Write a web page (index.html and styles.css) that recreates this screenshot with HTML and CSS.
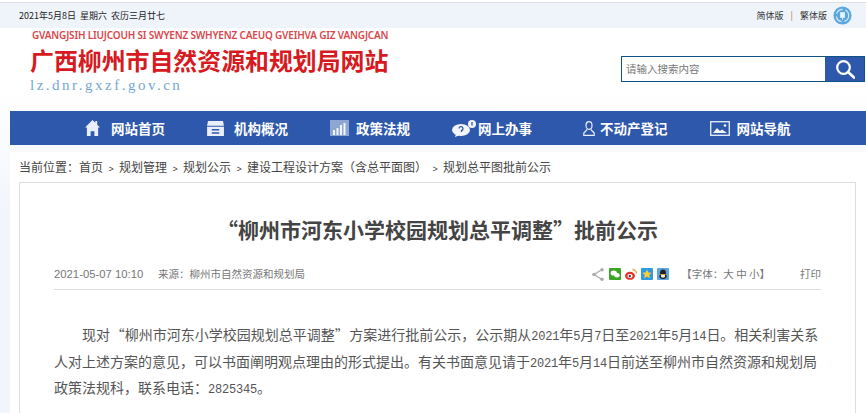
FILE: index.html
```html
<!DOCTYPE html>
<html lang="zh-CN">
<head>
  <meta charset="UTF-8">
  <meta name="viewport" content="width=device-width, initial-scale=1.0">
  <title>“柳州市河东小学校园规划总平调整”批前公示</title>
  <link rel="stylesheet" href="styles.css">
</head>
<body>

  <!-- Top bar -->
  <div class="topbar">
    <span class="date">2021年5月8日&nbsp; 星期六&nbsp; 农历三月廿七</span>
    <div class="lang">
      <a>简体版</a>
      <span class="lang-sep">|</span>
      <a>繁体版</a>
      <svg class="globe" viewBox="0 0 20 20">
        <circle cx="10" cy="10" r="9.5" fill="#5aa7e2"/>
        <circle cx="10" cy="10" r="6.5" fill="none" stroke="#d6eafa" stroke-width="1.2" stroke-dasharray="8 3"/>
        <rect x="7.5" y="6.5" width="5" height="6" fill="#e8f3fc"/>
        <path d="M10 12.5v2" stroke="#e8f3fc" stroke-width="1"/>
      </svg>
    </div>
  </div>

  <!-- Logo and search -->
  <header class="header">
    <div class="logo">
      <div class="logo-pinyin">GVANGJSIH LIUJCOUH SI SWYENZ SWHYENZ CAEUQ GVEIHVA GIZ VANGJCAN</div>
      <div class="logo-title">广西柳州市自然资源和规划局网站</div>
      <div class="logo-url">lz.dnr.gxzf.gov.cn</div>
    </div>
    <form class="search">
      <span class="search-text">请输入搜索内容</span>
      <button type="button" class="search-btn">
        <svg viewBox="0 0 20 20" width="20" height="20">
          <circle cx="8.5" cy="8.5" r="6.3" fill="none" stroke="#fff" stroke-width="2.2"/>
          <path d="M13 13l6 5.5" stroke="#fff" stroke-width="2.6" stroke-linecap="round"/>
        </svg>
      </button>
    </form>
  </header>

  <!-- Main nav -->
  <nav class="nav">
    <a class="nav-item">
      <svg class="icon-home" viewBox="0 0 16 17">
        <path d="M8 0L0 8h2v9h4v-5h4v5h4V8h2l-3-3V1h-2v2z" fill="#e9eef8"/>
      </svg>
      网站首页
    </a>
    <a class="nav-item">
      <svg class="icon-org" viewBox="0 0 18 16">
        <path d="M1 0h16l1 5H0z" fill="#e9eef8"/>
        <path d="M0 6h18v10H0zM5 8.500v1.500h8V8.500zM5 12v1.500h8V12z" fill="#e9eef8" fill-rule="evenodd"/>
      </svg>
      机构概况
    </a>
    <a class="nav-item">
      <svg class="icon-law" viewBox="0 0 19 16">
        <rect width="19" height="16" fill="#8ea6d4"/>
        <path d="M3 10h2v5H3zM6.500 8h2v7h-2zM10 5h2v10h-2zM13.500 3h2v12h-2z" fill="#f2f5fb"/>
      </svg>
      政策法规
    </a>
    <a class="nav-item">
      <svg class="icon-office" viewBox="0 0 24 17">
        <ellipse cx="9" cy="10" rx="9" ry="6" fill="#f2f5fb"/>
        <path d="M4 14l-1 3 5-2z" fill="#f2f5fb"/>
        <path d="M7 8.500a2 2 0 1 1 2.500 2V12" fill="none" stroke="#2d58ab" stroke-width="1.300"/>
        <ellipse cx="20" cy="4" rx="4" ry="4" fill="#f2f5fb"/>
        <path d="M20 2v3.500" stroke="#2d58ab" stroke-width="1.300"/>
      </svg>
      网上办事
    </a>
    <a class="nav-item nav-item-wide">
      <svg class="icon-person" viewBox="0 0 12 15">
        <ellipse cx="6" cy="4.500" rx="3" ry="3.800" fill="none" stroke="#e9eef8" stroke-width="1.200"/>
        <path d="M4.200 8.500L.8 12v2.300h10.400V12L7.800 8.500" fill="none" stroke="#e9eef8" stroke-width="1.200"/>
      </svg>
      不动产登记
    </a>
    <a class="nav-item">
      <svg class="icon-map" viewBox="0 0 20 15">
        <rect x=".7" y=".7" width="18.600" height="13.600" fill="none" stroke="#dfe6f4" stroke-width="1.400"/>
        <path d="M3 12l4-5 3 3 2-1.500 5 3.500z" fill="#f2f5fb"/>
        <circle cx="15" cy="4.500" r="1.300" fill="#f2f5fb"/>
      </svg>
      网站导航
    </a>
  </nav>

  <main class="main">
    <div class="crumbs">
      当前位置：<a>首页</a><i>&gt;</i><a>规划管理</a><i>&gt;</i><a>规划公示</a><i>&gt;</i><a>建设工程设计方案（含总平面图）</a><i>&gt;</i><a>规划总平图批前公示</a>
    </div>

    <article class="article">
      <h1 class="article-title">“柳州市河东小学校园规划总平调整”批前公示</h1>

      <div class="meta">
        <span class="meta-date">2021-05-07 10:10</span>
        <span class="meta-source">来源：柳州市自然资源和规划局</span>
        <div class="share">
          <svg class="share-icon" viewBox="0 0 12 13">
            <path d="M10 1.500L2 6.500l8 5" fill="none" stroke="#aaa" stroke-width="1.200"/>
            <circle cx="10" cy="1.800" r="1.700" fill="#aaa"/>
            <circle cx="2" cy="6.500" r="1.800" fill="#aaa"/>
            <circle cx="10" cy="11.200" r="1.700" fill="#aaa"/>
          </svg>
          <svg class="sns" viewBox="0 0 12 12">
            <rect width="12" height="12" rx="1" fill="#3aa625"/>
            <ellipse cx="4.800" cy="5" rx="3.200" ry="2.600" fill="#fff"/>
            <ellipse cx="8" cy="7.300" rx="2.700" ry="2.200" fill="#fff"/>
          </svg>
          <svg class="sns" viewBox="0 0 12 12">
            <ellipse cx="5" cy="7.800" rx="5" ry="4" fill="#e0352d"/>
            <ellipse cx="5" cy="8" rx="2.600" ry="2.100" fill="#fff"/>
            <circle cx="4.800" cy="8.100" r="1.200" fill="#333"/>
            <path d="M7.500 1.500a4 4 0 0 1 4 4" fill="none" stroke="#f0a030" stroke-width="1.400"/>
          </svg>
          <svg class="sns" viewBox="0 0 12 12">
            <rect width="12" height="12" rx="1" fill="#2f9ae0"/>
            <path d="M6 1.500l1.400 3 3.300.3-2.500 2.200.8 3.200L6 8.500l-3 1.700.8-3.200L1.300 4.800l3.300-.3z" fill="#fc3"/>
          </svg>
          <svg class="sns" viewBox="0 0 12 12">
            <rect width="12" height="12" rx="1" fill="#5ba4dc"/>
            <ellipse cx="6" cy="5" rx="3" ry="3.600" fill="#222"/>
            <ellipse cx="6" cy="8.300" rx="3.600" ry="2.600" fill="#222"/>
            <ellipse cx="6" cy="8" rx="2.200" ry="1.800" fill="#eee"/>
            <path d="M3.500 6.500h5" stroke="#e8a020" stroke-width="1"/>
          </svg>
        </div>
        <span class="font-size">【字体：大 中 小】</span>
        <a class="print">打印</a>
      </div>

      <div class="content">
        <p>现对 “柳州市河东小学校园规划总平调整” 方案进行批前公示，公示期从<span class="num">2021</span>年<span class="num">5</span>月<span class="num">7</span>日至<span class="num">2021</span>年<span class="num">5</span>月<span class="num">14</span>日。相关利害关系人对上述方案的意见，可以书面阐明观点理由的形式提出。有关书面意见请于<span class="num">2021</span>年<span class="num">5</span>月<span class="num">14</span>日前送至柳州市自然资源和规划局政策法规科，联系电话：<span class="num">2825345</span>。</p>
      </div>
    </article>
  </main>

</body>
</html>
```

FILE: styles.css
```css
/* General Reset */
* {
  margin: 0;
  padding: 0;
  box-sizing: border-box;
}

html {
  overflow: hidden;
}

body {
  height: 413px;
  overflow: hidden;
  padding-top: 2px;
  font-family: "Noto Sans CJK SC", "Liberation Sans", sans-serif;
  color: #333;
  background: linear-gradient(#fff 90px, #f1f5fc 220px);
}

/* Top bar */
.topbar {
  display: flex;
  align-items: center;
  justify-content: space-between;
  height: 26px;
  padding: 0 14px 0 19px;
  border-top: 1px solid #dcdfe6;
  background: #eff4fb;
}

.date {
  font-size: 9px;
  color: #222;
}

.lang {
  display: flex;
  align-items: center;
  font-size: 9px;
  color: #333;
}

.lang-sep {
  margin: 0 7px;
  color: #b5703a;
}

.globe {
  width: 19px;
  height: 19px;
  margin-left: 6px;
}

/* Header */
.header {
  display: flex;
  justify-content: space-between;
  height: 83px;
  padding: 0 1px 0 30px;
}

.logo-pinyin {
  margin: 1px 0 0 2px;
  font-family: "Noto Sans", sans-serif;
  font-size: 10px;
  line-height: 13px;
  font-weight: 600;
  letter-spacing: -0.180px;
  color: #d9474c;
  white-space: nowrap;
}

.logo-title {
  margin-top: 3px;
  font-size: 23.900px;
  line-height: 30px;
  font-weight: 700;
  color: #d71a21;
  white-space: nowrap;
}

.logo-url {
  font-family: "Liberation Serif", serif;
  font-size: 15px;
  line-height: 20px;
  letter-spacing: 2.500px;
  color: #76a6cf;
}

.search {
  display: flex;
  width: 244px;
  height: 26px;
  margin-top: 28px;
  border: 1px solid #0e5288;
  background: #fff;
}

.search-text {
  flex: 1;
  padding-left: 4px;
  font-size: 10.500px;
  line-height: 23px;
  color: #777;
}

.search-btn {
  display: flex;
  align-items: center;
  justify-content: center;
  width: 39px;
  border: none;
  background: #2d58ab;
}

/* Main nav */
.nav {
  display: flex;
  align-items: center;
  gap: 42px;
  height: 34px;
  margin-left: 10px;
  padding-left: 75px;
  background: #2d58ab;
}

.nav-item {
  display: flex;
  align-items: center;
  font-size: 13.500px;
  font-weight: 700;
  color: #fff;
  white-space: nowrap;
}

.nav-item svg {
  flex: none;
}

.icon-home { width: 15px; height: 16px; margin-right: 11px; }
.icon-org { width: 17px; height: 15px; margin-right: 10px; }
.icon-law { width: 19px; height: 16px; margin-right: 7px; }
.icon-office { width: 24px; height: 17px; margin-right: 2px; }
.icon-person { width: 12px; height: 15px; margin-right: 5px; }
.icon-map { width: 20px; height: 15px; margin-right: 7px; }

.nav-item-wide {
  margin-left: 9px;
}

/* Breadcrumbs */
.main {
  margin: 7px 0 0 10px;
  padding-left: 9px;
  background: #fff;
}

.crumbs {
  height: 30px;
  font-size: 12px;
  line-height: 30px;
  color: #444;
  white-space: nowrap;
}

.crumbs i {
  display: inline-block;
  width: 16px;
  font-family: "Liberation Sans", sans-serif;
  font-size: 9px;
  font-style: normal;
  text-align: center;
}

/* Article */
.article {
  width: 837px;
  min-height: 260px;
  padding: 0 34px;
  border: 1px solid #ddd;
  border-bottom: none;
  background: #fff;
}

.article-title {
  padding-top: 30px;
  font-size: 21px;
  line-height: 32px;
  font-weight: 700;
  text-align: center;
  color: #444;
}

.meta {
  display: flex;
  align-items: center;
  height: 35px;
  margin-top: 10px;
  padding-top: 3px;
  border-bottom: 1px solid #ddd;
  font-size: 10.500px;
  color: #777;
}

.meta-date {
  width: 104px;
  font-family: "Liberation Sans", sans-serif;
  font-size: 11.300px;
  color: #777;
}

.share {
  display: flex;
  align-items: center;
  gap: 4px;
  margin-left: auto;
  padding-top: 1px;
}

.share-icon {
  width: 12px;
  height: 13px;
  margin-right: 1px;
}

.sns {
  width: 12px;
  height: 12px;
}

.font-size {
  margin-left: 12px;
  font-size: 10.500px;
  white-space: nowrap;
}

.print {
  margin-left: 30px;
  font-size: 10.500px;
}

.content {
  padding-top: 31px;
  font-size: 14px;
  line-height: 26.500px;
  word-spacing: -2.500px;
  color: #555;
}

.content p {
  text-indent: 28px;
}

.num {
  font-family: "Liberation Mono", monospace;
  font-size: 12px;
  line-height: 0;
  letter-spacing: -0.200px;
}
```
